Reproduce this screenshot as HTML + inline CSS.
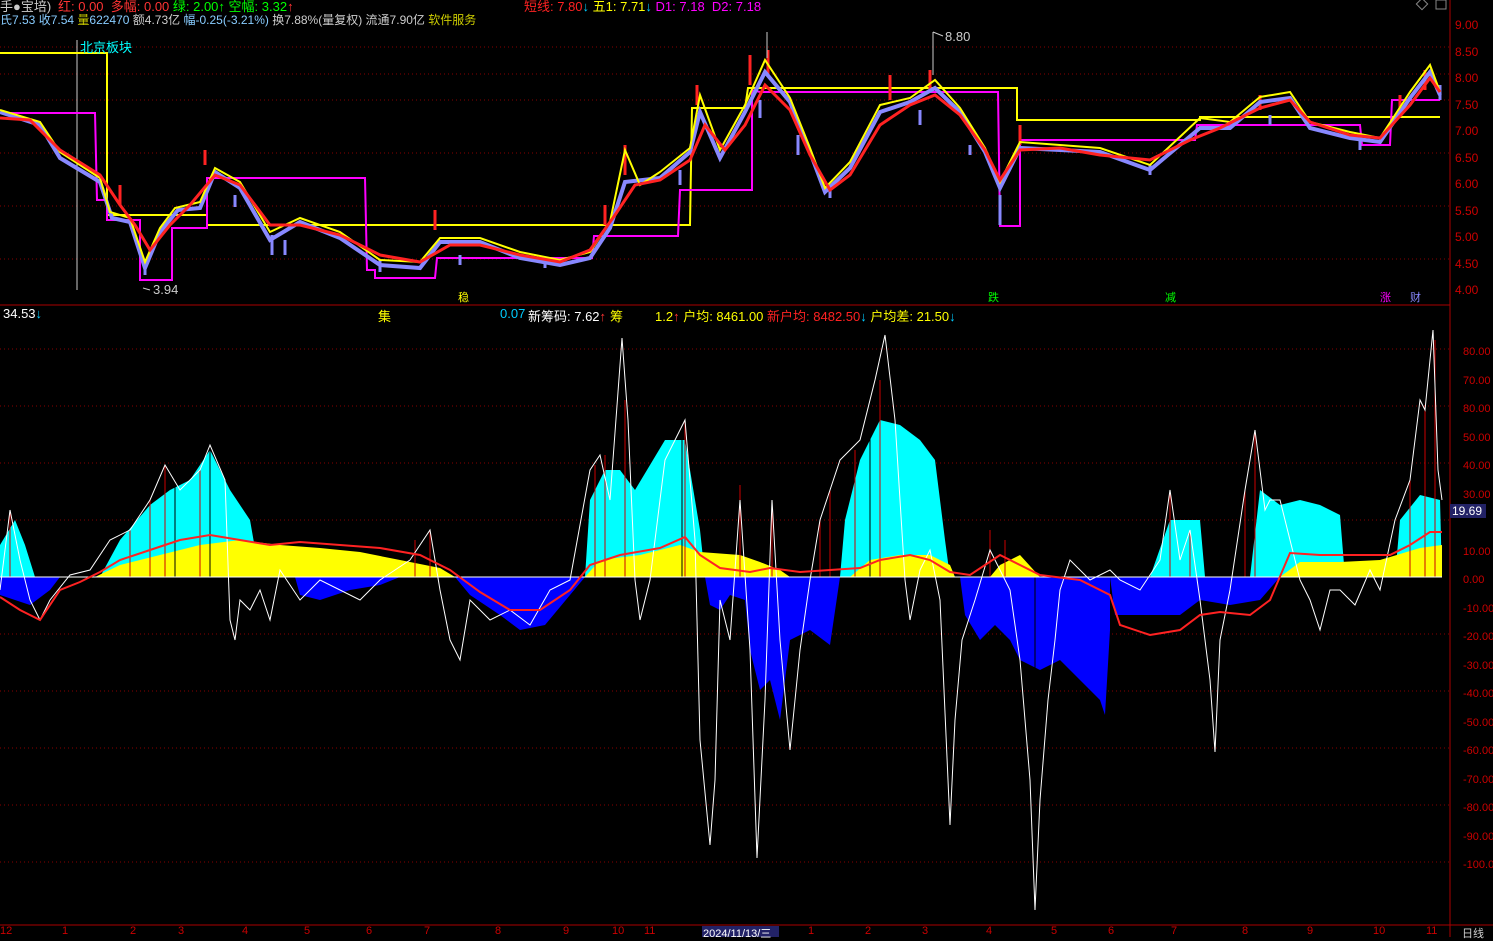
<!DOCTYPE html><html><head><meta charset="utf-8"><style>
body{margin:0;background:#000;width:1493px;height:937px;overflow:hidden;font-family:"Liberation Sans","Noto Sans CJK SC",sans-serif;font-size:13px}
.t{position:absolute;white-space:nowrap}
</style></head><body>
<svg width="1493" height="937" style="position:absolute;left:0;top:0">
<g stroke="#800" stroke-dasharray="1,3" stroke-width="1">
<line x1="0" y1="47" x2="1450" y2="47"/><line x1="0" y1="74" x2="1450" y2="74"/><line x1="0" y1="100" x2="1450" y2="100"/><line x1="0" y1="153" x2="1450" y2="153"/><line x1="0" y1="206" x2="1450" y2="206"/><line x1="0" y1="259" x2="1450" y2="259"/>
<line x1="0" y1="349" x2="1450" y2="349"/><line x1="0" y1="406" x2="1450" y2="406"/><line x1="0" y1="463" x2="1450" y2="463"/><line x1="0" y1="520" x2="1450" y2="520"/><line x1="0" y1="634" x2="1450" y2="634"/><line x1="0" y1="691" x2="1450" y2="691"/><line x1="0" y1="748" x2="1450" y2="748"/><line x1="0" y1="805" x2="1450" y2="805"/><line x1="0" y1="862" x2="1450" y2="862"/>
</g>
<line x1="0" y1="305" x2="1450" y2="305" stroke="#a00"/>
<line x1="0" y1="925" x2="1493" y2="925" stroke="#a00"/>
<line x1="1450" y1="0" x2="1450" y2="937" stroke="#a00"/>
<line x1="77" y1="40" x2="77" y2="290" stroke="#ccc"/>
<path fill="#0ff" d="M0,577L0,545L15,520L25,545L35,577ZM100,577L120,540L150,505L170,490L190,480L210,450L230,490L250,520L260,577ZM585,577L590,500L605,470L620,470L635,490L650,465L665,440L685,440L700,530L705,577ZM840,577L845,520L860,460L880,420L900,425L920,440L935,460L945,540L950,577ZM1150,577L1170,520L1200,520L1205,577ZM1250,577L1260,490L1280,505L1300,500L1320,505L1340,515L1345,577ZM1395,577L1400,520L1420,495L1440,500L1442,577Z"/>
<path fill="#ff0" d="M95,577L120,565L160,555L200,545L240,540L280,545L320,548L360,552L400,560L440,568L455,577ZM585,577L600,560L640,555L680,545L700,552L740,555L760,562L780,570L790,577ZM850,577L870,560L900,555L930,555L950,565L955,577ZM990,577L1000,565L1020,555L1040,577ZM1280,577L1300,562L1340,562L1380,560L1420,548L1442,545L1442,577Z"/>
<path fill="#00f" d="M0,577L0,595L30,605L50,590L60,577ZM295,577L300,595L320,600L350,590L380,585L400,577ZM455,577L470,595L500,615L520,630L545,625L570,595L585,577ZM705,577L710,605L720,610L730,595L745,600L750,650L760,690L770,680L780,720L790,640L810,630L830,645L840,577ZM960,577L965,615L980,640L995,625L1010,640L1020,660L1040,670L1060,660L1080,680L1100,700L1105,715L1110,630L1110,577ZM1110,577L1115,615L1180,615L1200,600L1230,605L1260,600L1280,577Z"/>
<g stroke="#c00" stroke-width="1">
<line x1="10" y1="510" x2="10" y2="577"/><line x1="130" y1="530" x2="130" y2="577"/><line x1="150" y1="500" x2="150" y2="577"/><line x1="165" y1="465" x2="165" y2="577"/><line x1="200" y1="470" x2="200" y2="577"/><line x1="415" y1="540" x2="415" y2="577"/><line x1="430" y1="530" x2="430" y2="577"/><line x1="595" y1="465" x2="595" y2="577"/><line x1="605" y1="455" x2="605" y2="577"/><line x1="625" y1="400" x2="625" y2="577"/><line x1="685" y1="420" x2="685" y2="577"/><line x1="740" y1="485" x2="740" y2="577"/><line x1="772" y1="500" x2="772" y2="577"/><line x1="820" y1="520" x2="820" y2="577"/><line x1="830" y1="490" x2="830" y2="577"/><line x1="855" y1="450" x2="855" y2="577"/><line x1="880" y1="380" x2="880" y2="577"/><line x1="990" y1="530" x2="990" y2="577"/><line x1="1005" y1="540" x2="1005" y2="577"/><line x1="1170" y1="490" x2="1170" y2="577"/><line x1="1190" y1="530" x2="1190" y2="577"/><line x1="1245" y1="490" x2="1245" y2="577"/><line x1="1255" y1="430" x2="1255" y2="577"/><line x1="1410" y1="480" x2="1410" y2="577"/><line x1="1425" y1="405" x2="1425" y2="577"/><line x1="1435" y1="340" x2="1435" y2="577"/>
</g>
<g stroke="#000" stroke-width="1"><line x1="175" y1="480" x2="175" y2="577"/><line x1="210" y1="450" x2="210" y2="577"/><line x1="682" y1="440" x2="682" y2="577"/><line x1="870" y1="420" x2="870" y2="577"/><line x1="1035" y1="577" x2="1035" y2="700"/></g>
<line x1="0" y1="577" x2="1442" y2="577" stroke="#fff"/>
<polyline fill="none" stroke="#fff" stroke-width="1" points="0,590 10,510 20,560 30,600 40,620 50,600 70,575 90,570 110,540 130,530 150,500 165,465 180,490 200,470 210,445 225,480 230,620 235,640 240,600 250,610 260,590 270,620 280,570 300,600 320,580 340,590 360,600 380,580 410,560 430,530 440,590 450,640 460,660 470,600 490,620 510,610 530,625 550,590 570,580 590,470 600,455 610,500 622,338 628,420 635,580 640,620 650,580 665,460 685,420 695,540 700,740 710,845 715,780 720,600 730,640 740,500 750,650 757,858 765,700 772,500 780,640 790,750 800,650 810,580 820,520 830,490 840,460 850,450 860,440 875,380 885,335 895,420 905,580 910,620 920,570 930,550 940,600 950,825 955,720 962,640 975,600 990,550 1010,590 1020,660 1030,780 1035,910 1040,800 1048,700 1055,640 1060,590 1070,560 1090,580 1110,570 1120,580 1140,590 1160,560 1170,490 1180,560 1190,530 1200,600 1210,680 1215,752 1220,640 1230,590 1245,490 1255,430 1265,510 1270,500 1280,500 1300,580 1310,600 1320,630 1330,590 1340,590 1355,605 1370,570 1380,590 1395,520 1410,480 1420,400 1425,410 1433,330 1438,470 1442,500"/>
<polyline fill="none" stroke="#f22" stroke-width="2" points="0,597 20,610 40,620 60,590 80,582 100,572 120,560 150,550 180,540 210,535 240,540 270,545 300,542 340,545 380,548 420,555 450,570 480,592 510,610 540,610 570,590 590,565 620,555 660,548 685,537 700,555 720,568 750,572 770,568 800,572 830,570 860,568 880,560 910,555 930,560 950,572 970,575 1000,555 1020,565 1040,575 1080,580 1110,595 1120,625 1150,635 1180,630 1200,615 1220,612 1250,615 1270,600 1290,553 1320,555 1360,555 1390,555 1410,545 1430,532 1442,532"/>
<polyline fill="none" stroke="#ff0" stroke-width="2" points="0,53 107,53 107,215 207,215 207,225 680,225 690,225 692,108 745,108 748,88 1017,88 1017,120 1200,120 1200,117 1440,117"/>
<polyline fill="none" stroke="#f0f" stroke-width="2" points="0,113 95,113 97,200 107,200 107,220 140,220 140,280 172,280 172,228 207,228 207,178 365,178 367,270 375,270 375,278 435,278 437,258 592,258 594,236 678,236 680,190 752,190 752,90 760,92 998,92 1000,226 1020,226 1020,140 1195,140 1197,125 1360,125 1362,145 1390,145 1392,100 1440,100"/>
<g stroke="#88f" stroke-width="3">
<line x1="145" y1="262" x2="145" y2="275"/><line x1="235" y1="195" x2="235" y2="207"/><line x1="272" y1="235" x2="272" y2="255"/><line x1="285" y1="240" x2="285" y2="255"/><line x1="380" y1="260" x2="380" y2="272"/><line x1="460" y1="255" x2="460" y2="265"/><line x1="545" y1="260" x2="545" y2="268"/><line x1="680" y1="170" x2="680" y2="185"/><line x1="760" y1="100" x2="760" y2="118"/><line x1="798" y1="135" x2="798" y2="155"/><line x1="830" y1="190" x2="830" y2="198"/><line x1="920" y1="110" x2="920" y2="125"/><line x1="970" y1="145" x2="970" y2="155"/><line x1="1000" y1="195" x2="1000" y2="225"/><line x1="1150" y1="165" x2="1150" y2="175"/><line x1="1270" y1="115" x2="1270" y2="125"/><line x1="1360" y1="140" x2="1360" y2="150"/><line x1="1440" y1="85" x2="1440" y2="100"/>
</g>
<g stroke="#f22" stroke-width="3">
<line x1="120" y1="185" x2="120" y2="205"/><line x1="205" y1="150" x2="205" y2="165"/><line x1="435" y1="210" x2="435" y2="230"/><line x1="605" y1="205" x2="605" y2="225"/><line x1="625" y1="145" x2="625" y2="175"/><line x1="697" y1="85" x2="697" y2="105"/><line x1="750" y1="55" x2="750" y2="85"/><line x1="768" y1="50" x2="768" y2="75"/><line x1="890" y1="75" x2="890" y2="100"/><line x1="930" y1="70" x2="930" y2="90"/><line x1="1020" y1="125" x2="1020" y2="145"/><line x1="1260" y1="95" x2="1260" y2="110"/><line x1="1400" y1="95" x2="1400" y2="115"/><line x1="1425" y1="70" x2="1425" y2="90"/>
</g>
<polyline fill="none" stroke="#88f" stroke-width="4" points="0,112 40,125 60,158 100,182 112,218 130,222 145,268 160,232 178,210 200,208 215,172 240,188 270,240 300,222 340,238 380,265 420,268 440,242 480,242 520,258 560,265 590,258 610,228 625,182 660,178 690,152 700,112 720,158 745,112 765,72 790,102 810,152 825,192 850,168 880,112 910,102 935,88 960,112 985,152 1000,188 1020,148 1060,150 1100,152 1150,170 1200,128 1230,128 1260,102 1290,98 1310,128 1350,138 1380,142 1410,98 1430,72 1440,95"/>
<polyline fill="none" stroke="#ff0" stroke-width="2" points="0,110 40,122 60,152 100,178 110,212 130,218 145,262 160,228 175,208 200,202 215,168 240,182 270,232 300,218 340,232 380,260 420,262 440,238 480,238 520,252 560,260 590,252 610,222 625,150 640,185 660,172 690,148 700,95 720,150 745,105 765,60 790,98 810,148 825,188 850,162 880,105 910,98 935,80 960,108 985,148 1000,182 1020,142 1060,145 1100,148 1150,165 1200,118 1230,122 1260,97 1290,92 1310,122 1350,132 1380,138 1410,92 1430,65 1440,92"/>
<polyline fill="none" stroke="#f22" stroke-width="3" points="0,118 30,120 60,150 100,175 120,205 135,225 150,250 170,225 190,205 215,175 240,185 270,225 300,225 340,235 380,255 420,262 450,245 480,245 520,255 560,262 590,250 615,215 635,185 660,180 690,160 705,125 725,150 745,125 765,85 790,110 810,155 830,190 850,175 880,125 910,105 935,95 960,115 985,150 1000,180 1020,150 1060,148 1100,155 1150,160 1190,140 1220,128 1260,108 1290,100 1310,122 1350,135 1380,138 1410,105 1430,78 1440,92"/>
<polyline fill="none" stroke="#ccc" points="767,32 767,58"/><polyline fill="none" stroke="#ccc" points="933,32 933,75"/>
<polyline fill="none" stroke="#ccc" points="933,32 943,36"/><polyline fill="none" stroke="#ccc" points="143,288 150,290"/>
<rect x="1418" y="0" width="8" height="8" fill="none" stroke="#888" transform="rotate(45 1422 4)"/><rect x="1436" y="0" width="10" height="9" fill="none" stroke="#888"/>
<rect x="702" y="926" width="77" height="11" fill="#226"/>
</svg>
<div class="t" style="left:0;top:-4px;color:#ccc">手●宝培)</div>
<div class="t" style="left:58px;top:-4px;color:#f33">红: 0.00 &nbsp;多幅: 0.00 <span style="color:#0f0">绿: 2.00↑</span> <span style="color:#0f0">空幅: 3.32</span><span style="color:#f33">↑</span></div>
<div class="t" style="left:524px;top:-4px;color:#f22">短线: 7.80<span style="color:#0cf">↓</span> <span style="color:#ff0">五1: 7.71</span><span style="color:#0cf">↓</span> <span style="color:#f0f">D1: 7.18 &nbsp;D2: 7.18</span></div>
<div class="t" style="left:0;top:11px;color:#8cf;font-size:12px">氏7.53 收7.54 <span style="color:#cc0">量</span>622470 <span style="color:#ccc">额4.73亿</span> 幅-0.25(-3.21%) <span style="color:#ccc">换7.88%(量复权) 流通7.90亿</span> <span style="color:#cc0">软件服务</span></div>
<div class="t" style="left:80px;top:37px;color:#0ff">北京板块</div>
<div class="t" style="left:945px;top:29px;color:#ccc">8.80</div>
<div class="t" style="left:153px;top:282px;color:#ccc">3.94</div>
<div class="t" style="left:458px;top:289px;color:#ff0;font-size:11px">稳</div>
<div class="t" style="left:988px;top:289px;color:#0f0;font-size:11px">跌</div>
<div class="t" style="left:1165px;top:289px;color:#0f0;font-size:11px">减</div>
<div class="t" style="left:1380px;top:289px;color:#f0f;font-size:11px">涨</div>
<div class="t" style="left:1410px;top:289px;color:#88f;font-size:11px">财</div>
<div class="t" style="left:3px;top:306px;color:#fff">34.53<span style="color:#0cf">↓</span></div>
<div class="t" style="left:378px;top:306px;color:#ff0">集</div>
<div class="t" style="left:500px;top:306px;color:#0cf">0.07</div>
<div class="t" style="left:528px;top:306px;color:#fff">新筹码: 7.62<span style="color:#f33">↑</span></div>
<div class="t" style="left:610px;top:306px;color:#ff0">筹</div>
<div class="t" style="left:655px;top:306px;color:#ff0">1.2<span style="color:#f33">↑</span> 户均: 8461.00 <span style="color:#f22">新户均: 8482.50</span><span style="color:#0cf">↓</span> 户均差: 21.50<span style="color:#0cf">↓</span></div>
<div class="t" style="left:1455px;top:12px;color:#c00;font-size:12px;line-height:26.5px">9.00<br>8.50<br>8.00<br>7.50<br>7.00<br>6.50<br>6.00<br>5.50<br>5.00<br>4.50<br>4.00</div>
<div class="t" style="left:1463px;top:338px;color:#c00;font-size:11px;line-height:28.5px">80.00<br>70.00<br>80.00<br>50.00<br>40.00<br>30.00<br>&nbsp;<br>10.00<br>0.00<br>-10.00<br>-20.00<br>-30.00<br>-40.00<br>-50.00<br>-60.00<br>-70.00<br>-80.00<br>-90.00<br>-100.00</div>
<div class="t" style="left:1450px;top:504px;background:#226;color:#fff;padding:0 4px 0 2px;font-size:12px">19.69</div>
<div class="t" style="left:0;top:925px;color:#c00;font-size:11px"><span style="position:absolute;left:0">12</span><span style="position:absolute;left:62px">1</span><span style="position:absolute;left:130px">2</span><span style="position:absolute;left:178px">3</span><span style="position:absolute;left:242px">4</span><span style="position:absolute;left:304px">5</span><span style="position:absolute;left:366px">6</span><span style="position:absolute;left:424px">7</span><span style="position:absolute;left:495px">8</span><span style="position:absolute;left:563px">9</span><span style="position:absolute;left:612px">10</span><span style="position:absolute;left:644px">11</span><span style="position:absolute;left:703px;color:#fff">2024/11/13/三</span><span style="position:absolute;left:808px">1</span><span style="position:absolute;left:865px">2</span><span style="position:absolute;left:922px">3</span><span style="position:absolute;left:986px">4</span><span style="position:absolute;left:1051px">5</span><span style="position:absolute;left:1108px">6</span><span style="position:absolute;left:1171px">7</span><span style="position:absolute;left:1242px">8</span><span style="position:absolute;left:1307px">9</span><span style="position:absolute;left:1373px">10</span><span style="position:absolute;left:1426px">11</span><span style="position:absolute;left:1462px;color:#ccc">日线</span></div>
</body></html>
